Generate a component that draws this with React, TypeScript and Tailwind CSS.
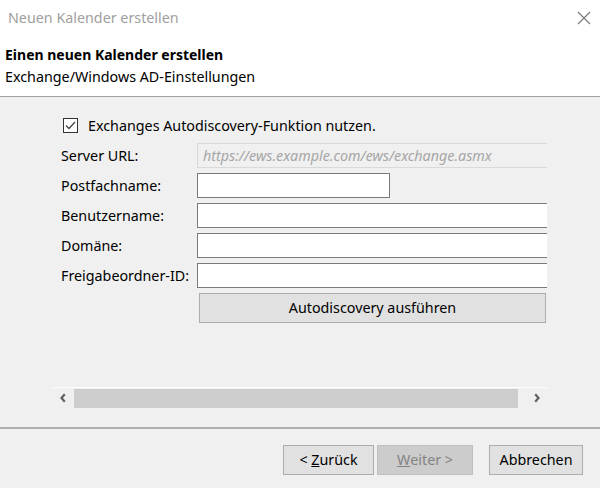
import React from "react";

function Chevron({ dir }: { dir: "left" | "right" }) {
  return (
    <svg width="8" height="10" viewBox="0 0 8 10">
      {dir === "left" ? (
        <path d="M5.8 1.3 L2.5 5 L5.8 8.7" fill="none" stroke="#606060" strokeWidth="2.2" />
      ) : (
        <path d="M2.2 1.3 L5.5 5 L2.2 8.7" fill="none" stroke="#606060" strokeWidth="2.2" />
      )}
    </svg>
  );
}

function Field({ label, children }: { label: string; children: React.ReactNode }) {
  return (
    <div className="flex items-center h-[25px]">
      <div className="w-[136px] shrink-0 leading-[20px]">{label}</div>
      {children}
    </div>
  );
}

export default function App() {
  return (
    <div className="w-[600px] h-[488px] bg-[#f0f0f0] flex flex-col overflow-hidden text-[14.3px] text-black font-['Noto_Sans','Liberation_Sans',sans-serif]">
      <div className="h-[97px] shrink-0 bg-white border-b border-[#a0a0a0] flex flex-col">
        <div className="h-[36px] flex items-center justify-between pl-[8px] pr-[9px] text-[#a0a0a0]">
          <span className="leading-[20px]">Neuen Kalender erstellen</span>
          <svg width="14" height="14" viewBox="0 0 14 14">
            <path d="M1 1 L13 13 M13 1 L1 13" stroke="#777" strokeWidth="1.1" fill="none" />
          </svg>
        </div>
        <div className="pl-[5px] mt-[9px] leading-[20px] font-bold text-[14px]">Einen neuen Kalender erstellen</div>
        <div className="pl-[5px] mt-[2px] leading-[20px]">Exchange/Windows AD-Einstellungen</div>
      </div>

      <div className="h-[330px] shrink-0 pl-[53px] flex flex-col">
        <div className="w-[494px] h-[290px] overflow-hidden flex flex-col">
          <div className="flex items-center mt-[21px] ml-[10px] h-[15px]">
            <div className="w-[15px] h-[15px] border border-[#333] bg-white flex items-center justify-center shrink-0">
              <svg width="11" height="9" viewBox="0 0 11 9">
                <path d="M1 4.5 L4 7.5 L10 1" fill="none" stroke="#444" strokeWidth="1.3" />
              </svg>
            </div>
            <span className="ml-[10px] leading-[20px]">Exchanges Autodiscovery-Funktion nutzen.</span>
          </div>
          <div className="flex flex-col gap-[5px] mt-[10px] pl-[8px]">
            <Field label="Server URL:">
              <div className="w-[380px] shrink-0 h-[25px] border border-[#d9d9d9] bg-[#f0f0f0] flex items-center pl-[5px] italic text-[#a6a6a6] whitespace-nowrap">
                https://ews.example.com/ews/exchange.asmx
              </div>
            </Field>
            <Field label="Postfachname:">
              <div className="w-[193px] shrink-0 h-[25px] border border-[#7a7a7a] bg-white" />
            </Field>
            <Field label="Benutzername:">
              <div className="w-[380px] shrink-0 h-[25px] border border-[#7a7a7a] bg-white" />
            </Field>
            <Field label="Domäne:">
              <div className="w-[380px] shrink-0 h-[25px] border border-[#7a7a7a] bg-white" />
            </Field>
            <Field label="Freigabeordner-ID:">
              <div className="w-[380px] shrink-0 h-[25px] border border-[#7a7a7a] bg-white" />
            </Field>
            <div className="flex h-[30px]">
              <div className="w-[138px] shrink-0" />
              <div className="w-[347px] h-[30px] border border-[#adadad] bg-[#e1e1e1] flex items-center justify-center leading-[20px]">
                Autodiscovery ausführen
              </div>
            </div>
          </div>
        </div>
        <div className="w-[494px] h-[21px] border-t border-white flex items-center">
          <div className="w-[20px] h-[20px] flex items-center justify-center">
            <Chevron dir="left" />
          </div>
          <div className="flex-1 h-[20px] flex items-center">
            <div className="ml-[1px] w-[444px] h-[19px] bg-[#cdcdcd]" />
          </div>
          <div className="w-[20px] h-[20px] flex items-center justify-center">
            <Chevron dir="right" />
          </div>
        </div>
      </div>

      <div className="h-[2px] shrink-0 bg-[#b0b0b0]" />

      <div className="flex mt-[16px] h-[30px]">
        <div className="ml-[283px] w-[91px] h-[30px] border border-[#adadad] bg-[#e1e1e1] flex items-center justify-center leading-[20px]">
          &lt;&nbsp;<u>Z</u>urück
        </div>
        <div className="ml-[3px] w-[96px] h-[30px] border border-[#bfbfbf] bg-[#cccccc] flex items-center justify-center leading-[20px] text-[#838383]">
          <u>W</u>eiter &gt;
        </div>
        <div className="ml-[16px] w-[94px] h-[30px] border border-[#adadad] bg-[#e1e1e1] flex items-center justify-center leading-[20px]">
          Abbrechen
        </div>
      </div>
    </div>
  );
}
